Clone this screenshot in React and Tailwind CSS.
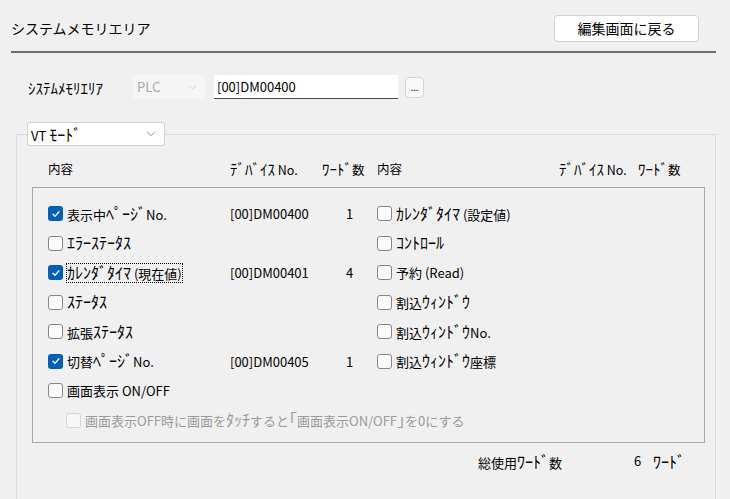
import React from "react";
import { ChevronDown } from "lucide-react";

const font = { fontFamily: '"Noto Sans CJK JP", "Noto Sans", sans-serif' };

// half-width katakana are tiny in Noto, so bump their size a little
function T({ children, big = "text-[16px]" }) {
  const parts = String(children).split(/([\uFF61-\uFF9F]+)/);
  return (
    <>
      {parts.map((p, i) =>
        /[\uFF61-\uFF9F]/.test(p) ? (
          <span key={i} className={`${big} leading-none`}>{p}</span>
        ) : (
          <span key={i}>{p}</span>
        )
      )}
    </>
  );
}

function Check({ checked, disabled }) {
  if (checked) {
    return (
      <span className="flex h-[15px] w-[15px] shrink-0 items-center justify-center rounded-[3px] bg-[#005fb8]">
        <svg width="10" height="10" viewBox="0 0 10 10">
          <path d="M2 5.2l2 2 4-4.4" fill="none" stroke="#fff" strokeWidth="1.3" strokeLinecap="round" strokeLinejoin="round" />
        </svg>
      </span>
    );
  }
  return (
    <span
      className={
        disabled
          ? "h-[15px] w-[15px] shrink-0 rounded-[3px] border border-[#d6d6d6] bg-[#f7f7f7]"
          : "h-[15px] w-[15px] shrink-0 rounded-[3px] border border-[#858585] bg-[#fbfbfb]"
      }
    />
  );
}

function Item({ label, checked, focus }) {
  return (
    <div className="flex items-center gap-[4px]">
      <Check checked={checked} />
      <span className={focus ? "outline outline-1 outline-dotted outline-black leading-[16px]" : "leading-[16px]"}>
        <T>{label}</T>
      </span>
    </div>
  );
}

const left = [
  { label: "表示中ﾍﾟｰｼﾞNo.", checked: true, dev: "[00]DM00400", n: "1" },
  { label: "ｴﾗｰｽﾃｰﾀｽ" },
  { label: "ｶﾚﾝﾀﾞﾀｲﾏ (現在値)", checked: true, focus: true, dev: "[00]DM00401", n: "4" },
  { label: "ｽﾃｰﾀｽ" },
  { label: "拡張ｽﾃｰﾀｽ" },
  { label: "切替ﾍﾟｰｼﾞNo.", checked: true, dev: "[00]DM00405", n: "1" },
];

const right = [
  "ｶﾚﾝﾀﾞﾀｲﾏ (設定値)",
  "ｺﾝﾄﾛｰﾙ",
  "予約 (Read)",
  "割込ｳｨﾝﾄﾞｳ",
  "割込ｳｨﾝﾄﾞｳNo.",
  "割込ｳｨﾝﾄﾞｳ座標",
];

export default function App() {
  return (
    <div className="h-[499px] w-[730px] overflow-hidden bg-[#f0f0f0] text-[13px] text-black" style={font}>
      {/* header */}
      <div className="flex h-[27px] items-center justify-between pl-[11px] pr-[31px] mt-[15px]">
        <div className="text-[14px]">システムメモリエリア</div>
        <button className="h-[27px] w-[145px] rounded-[4px] border border-[#d0d0d0] bg-white text-[14px]">編集画面に戻る</button>
      </div>
      <div className="ml-[11px] mt-[9px] h-[2px] w-[705px] bg-[#6e6e6e]" />

      {/* system memory row */}
      <div className="mt-[22px] flex h-[24px] items-center pl-[28px]">
        <div className="w-[105px] leading-none"><T big="text-[15px]">ｼｽﾃﾑﾒﾓﾘｴﾘｱ</T></div>
        <div className="flex h-[24px] w-[72px] items-center justify-between bg-[#f5f5f5] pl-[4px] pr-[6px] text-[#a8a8a8]">
          <span>PLC</span>
          <ChevronDown size={13} strokeWidth={1.2} color="#c4c4c4" />
        </div>
        <div className="ml-[9px] flex h-[24px] w-[184px] items-center border-b border-[#4a4a4a] bg-white pl-[3px]">[00]DM00400</div>
        <button className="ml-[7px] flex h-[21px] w-[19px] items-center justify-center rounded-[4px] border border-[#d6d6d6] bg-[#f8f8f8] text-[9px] leading-none">...</button>
      </div>

      {/* group */}
      <fieldset className="mt-[23px] ml-[16px] h-[400px] w-[700px] border border-[#dadada] pl-[10px] pr-0">
        <legend className="p-0">
          <div className="flex h-[24px] w-[138px] items-center justify-between rounded-[3px] border border-[#cfcfcf] bg-white pl-[3px] pr-[6px]">
            <span className="leading-none"><T>VT ﾓｰﾄﾞ</T></span>
            <ChevronDown size={14} strokeWidth={1.2} color="#606060" />
          </div>
        </legend>

        <div className="mt-[14px] flex h-[18px] items-center pl-[21px] text-[12.5px]">
          <div className="w-[182px]">内容</div>
          <div className="w-[92px] leading-none"><T big="text-[15px]">ﾃﾞﾊﾞｲｽ No.</T></div>
          <div className="w-[55px] leading-none"><T big="text-[15px]">ﾜｰﾄﾞ数</T></div>
          <div className="w-[182px]">内容</div>
          <div className="w-[79px] leading-none"><T big="text-[15px]">ﾃﾞﾊﾞｲｽ No.</T></div>
          <div className="leading-none"><T big="text-[15px]">ﾜｰﾄﾞ数</T></div>
        </div>

        <div className="ml-[5px] mt-[9px] w-[673px] border border-[#a8a8a8] pb-[7px] pl-[15px] pt-[11px]">
          {left.map((r, i) => (
            <div key={i} className="flex h-[29.5px] items-center">
              <div className="w-[182px]">
                <Item label={r.label} checked={r.checked} focus={r.focus} />
              </div>
              <div className="w-[90px]">{r.dev || ""}</div>
              <div className="w-[57px] pl-[26px]">{r.n || ""}</div>
              <Item label={right[i]} />
            </div>
          ))}
          <div className="flex h-[29.5px] items-center">
            <Item label="画面表示 ON/OFF" />
          </div>
          <div className="flex h-[29.5px] items-center gap-[4px] pl-[18px] text-[#9a9a9a]">
            <Check disabled />
            <span className="leading-[16px]"><T>画面表示OFF時に画面をﾀｯﾁすると｢画面表示ON/OFF｣を0にする</T></span>
          </div>
        </div>

        <div className="mt-[8px] flex h-[20px] items-center pl-[451px]">
          <div className="w-[156px] leading-none"><T>総使用ﾜｰﾄﾞ数</T></div>
          <div className="w-[19px]">6</div>
          <div className="leading-none"><T>ﾜｰﾄﾞ</T></div>
        </div>
      </fieldset>
    </div>
  );
}
